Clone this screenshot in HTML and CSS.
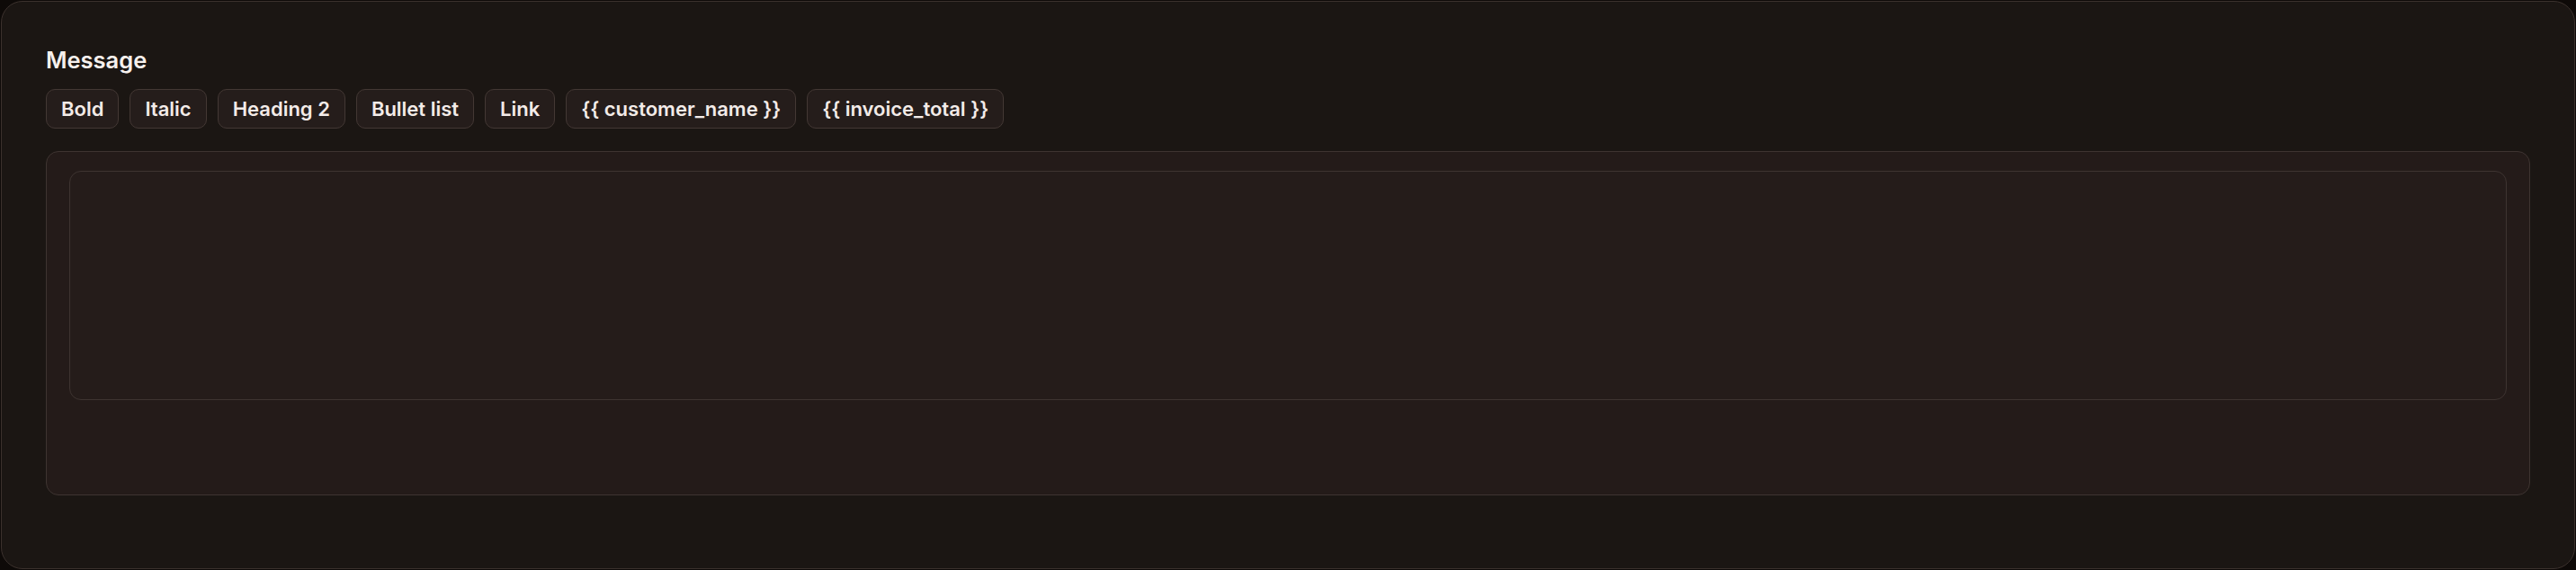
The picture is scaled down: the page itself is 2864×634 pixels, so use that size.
FILE: index.html
```html
<!DOCTYPE html>
<html lang="en">
<head>
<meta charset="utf-8">
<title>Message editor</title>
<link rel="stylesheet" href="styles.css">
</head>
<body>
<section class="card">
  <h2 class="label">Message</h2>
  <div class="toolbar">
    <button class="chip" type="button">Bold</button>
    <button class="chip" type="button">Italic</button>
    <button class="chip" type="button">Heading 2</button>
    <button class="chip" type="button">Bullet list</button>
    <button class="chip" type="button">Link</button>
    <button class="chip" type="button">{{ customer_name }}</button>
    <button class="chip" type="button">{{ invoice_total }}</button>
  </div>
  <div class="editor">
    <div class="editor-area" contenteditable="true"></div>
  </div>
</section>
</body>
</html>
```

FILE: styles.css
```css
* { box-sizing: border-box; }

html, body {
  margin: 0;
  padding: 0;
  background: #0e0a08;
}

body {
  padding: 1px;
  height: 634px;
  font-family: "Inter", "Lato", "Noto Sans", sans-serif;
  color: #f4ece9;
}

.card {
  height: 632px;
  background: #1b1613;
  border: 1px solid #3b312d;
  border-radius: 24px;
  padding: 49px 49px;
}

.label {
  margin: 0 0 17px 0;
  font-size: 25.5px;
  line-height: 31px;
  font-weight: 600;
  color: #f6f0ed;
}

.toolbar {
  display: flex;
  flex-wrap: wrap;
  gap: 12px;
}

.chip {
  height: 44px;
  padding: 0 16px;
  background: #251d1b;
  border: 1px solid #433834;
  border-radius: 10px;
  color: #f3ebe8;
  font-family: inherit;
  font-size: 22px;
  font-weight: 600;
  line-height: 26px;
  cursor: pointer;
}

.editor {
  margin-top: 25px;
  height: 383px;
  background: #241b19;
  border: 1px solid #3e3431;
  border-radius: 14px;
  padding: 21px 25px;
}

.editor-area {
  height: 255px;
  background: #251c1a;
  border: 1px solid #3e3431;
  border-radius: 13px;
  outline: none;
}
```
